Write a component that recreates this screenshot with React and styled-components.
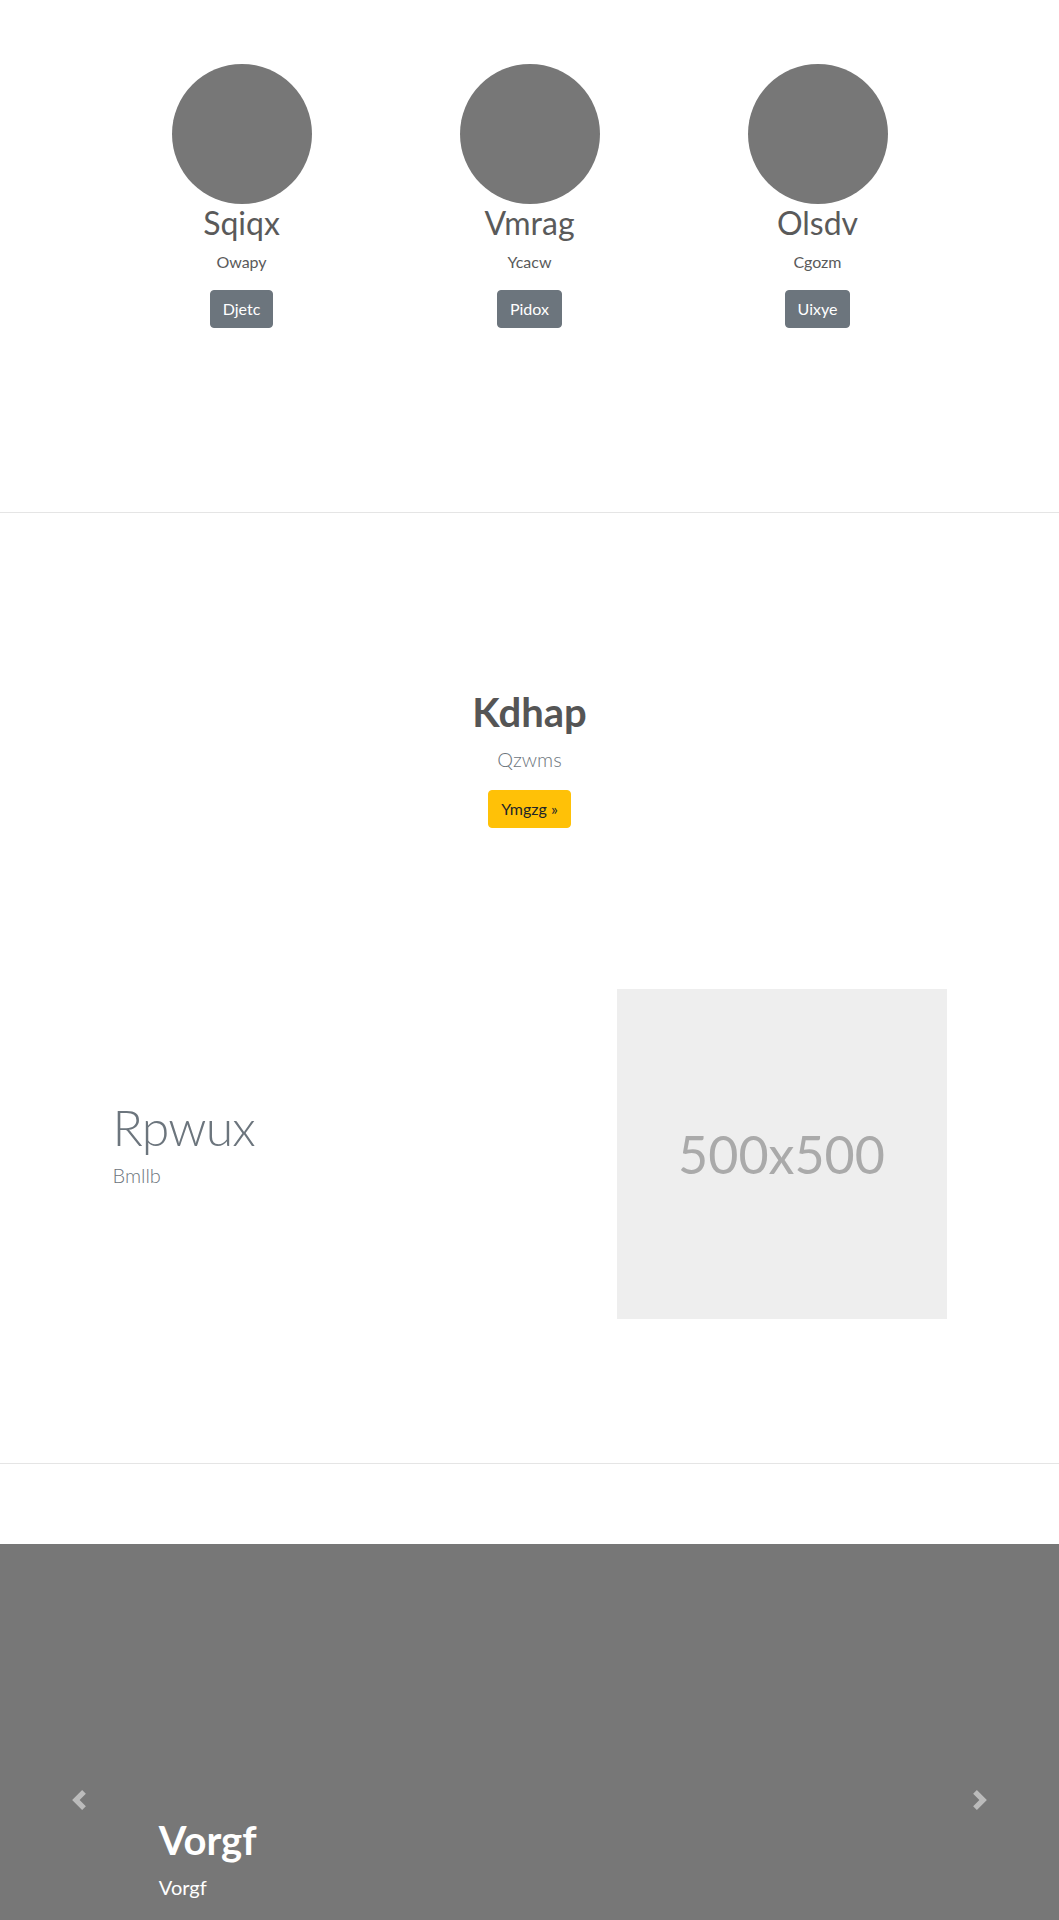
import React from "react";
import styled, { createGlobalStyle } from "styled-components";

const team = [
  { name: "Sqiqx", role: "Owapy", action: "Djetc" },
  { name: "Vmrag", role: "Ycacw", action: "Pidox" },
  { name: "Olsdv", role: "Cgozm", action: "Uixye" },
];

export default function App() {
  return (
    <>
      <GlobalStyle />
      <Page>
        <Marketing>
          <Container>
            <TeamGrid>
              {team.map((m) => (
                <Member key={m.name}>
                  <Avatar />
                  <MemberName>{m.name}</MemberName>
                  <MemberRole>{m.role}</MemberRole>
                  <Button $variant="secondary">{m.action}</Button>
                </Member>
              ))}
            </TeamGrid>
          </Container>
        </Marketing>

        <Divider />

        <Hero>
          <HeroTitle>Kdhap</HeroTitle>
          <Lead>Qzwms</Lead>
          <Button $variant="warning">Ymgzg »</Button>
        </Hero>

        <Featurette>
          <Container>
            <FeatureRow>
              <FeatureText>
                <FeatureHeading>Rpwux</FeatureHeading>
                <FeatureLead>Bmllb</FeatureLead>
              </FeatureText>
              <FeatureMedia>
                <Placeholder>500x500</Placeholder>
              </FeatureMedia>
            </FeatureRow>
          </Container>
        </Featurette>

        <Divider />

        <Carousel>
          <Control $side="left">
            <svg width="20" height="20" viewBox="0 0 8 8" fill="#fff">
              <path d="M5.25 0l-4 4 4 4 1.5-1.5L4.25 4l2.5-2.5L5.25 0z" />
            </svg>
          </Control>
          <Caption>
            <CaptionTitle>Vorgf</CaptionTitle>
            <CaptionText>Vorgf</CaptionText>
          </Caption>
          <Control $side="right">
            <svg width="20" height="20" viewBox="0 0 8 8" fill="#fff">
              <path d="M2.75 0l-1.5 1.5L3.75 4l-2.5 2.5L2.75 8l4-4-4-4z" />
            </svg>
          </Control>
        </Carousel>
      </Page>
    </>
  );
}

//! ****************** STYLES ******************//

const GlobalStyle = createGlobalStyle`
  *, *::before, *::after {
    box-sizing: border-box;
  }
  body {
    margin: 0;
    font-family: Lato, "Liberation Sans", sans-serif;
    font-size: 16px;
    line-height: 1.5;
    color: #5a5a5a;
    background: #fff;
  }
`;

const Page = styled.main`
  display: flex;
  flex-direction: column;
  width: 100%;
`;

const Container = styled.div`
  width: 864px;
  margin: 0 auto;
`;

const Marketing = styled.section`
  height: 432px;
  padding-top: 64px;
`;

const TeamGrid = styled.div`
  display: grid;
  grid-template-columns: repeat(3, 1fr);
`;

const Member = styled.div`
  display: flex;
  flex-direction: column;
  align-items: center;
  padding: 0 15px;
  text-align: center;
`;

const Avatar = styled.div`
  width: 140px;
  height: 140px;
  border-radius: 50%;
  background: #777;
`;

const MemberName = styled.h2`
  margin: 0 0 8px;
  font-size: 32px;
  font-weight: 400;
  line-height: 1.2;
  color: #5a5a5a;
`;

const MemberRole = styled.p`
  margin: 0 12px 16px;
  font-size: 16px;
`;

const Button = styled.span`
  display: inline-block;
  padding: 6px 12px;
  font-size: 16px;
  line-height: 1.5;
  border: 1px solid;
  border-radius: 4px;
  background: ${(p) => (p.$variant === "warning" ? "#ffc107" : "#6c757d")};
  border-color: ${(p) => (p.$variant === "warning" ? "#ffc107" : "#6c757d")};
  color: ${(p) => (p.$variant === "warning" ? "#212529" : "#fff")};
`;

const Divider = styled.hr`
  height: 0;
  margin: 80px 0;
  border: 0;
  border-top: 1px solid rgba(0, 0, 0, 0.1);
`;

const Hero = styled.section`
  display: flex;
  flex-direction: column;
  align-items: center;
  padding: 95px 0 16px;
  text-align: center;
`;

const HeroTitle = styled.h1`
  margin: 0 0 8px;
  font-size: 40px;
  font-weight: 700;
  line-height: 1.2;
  color: #555;
`;

const Lead = styled.p`
  margin: 0 0 16px;
  font-size: 20px;
  font-weight: 300;
  color: #6c757d;
`;

const Featurette = styled.section`
  padding: 145px 0 64px;
`;

const FeatureRow = styled.div`
  display: grid;
  grid-template-columns: 7fr 5fr;
  align-items: center;
`;

const FeatureText = styled.div`
  padding: 0 15px;
`;

const FeatureHeading = styled.h2`
  margin: 0 0 8px;
  font-size: 50px;
  font-weight: 300;
  line-height: 1;
  letter-spacing: -0.05rem;
  color: #6c757d;
`;

const FeatureLead = styled.p`
  margin: 0 0 16px;
  font-size: 20px;
  font-weight: 300;
  color: #6c757d;
`;

const FeatureMedia = styled.div`
  padding: 0 15px;
`;

const Placeholder = styled.div`
  display: flex;
  align-items: center;
  justify-content: center;
  width: 330px;
  height: 330px;
  background: #eee;
  color: #aaa;
  font-size: 52px;
  line-height: 1;
`;

const Carousel = styled.section`
  position: relative;
  height: 512px;
  background: #777;
  overflow: hidden;
`;

const Control = styled.div`
  position: absolute;
  top: 0;
  bottom: 0;
  ${(p) => (p.$side === "left" ? "left: 0;" : "right: 0;")}
  width: 15%;
  display: flex;
  align-items: center;
  justify-content: center;
  opacity: 0.5;
`;

const Caption = styled.div`
  position: absolute;
  top: 272px;
  left: 15%;
  right: 15%;
  color: #fff;
  text-align: left;
`;

const CaptionTitle = styled.h1`
  margin: 0 0 8px;
  font-size: 40px;
  font-weight: 700;
  line-height: 1.2;
`;

const CaptionText = styled.p`
  margin: 0 0 16px;
  font-size: 20px;
`;
